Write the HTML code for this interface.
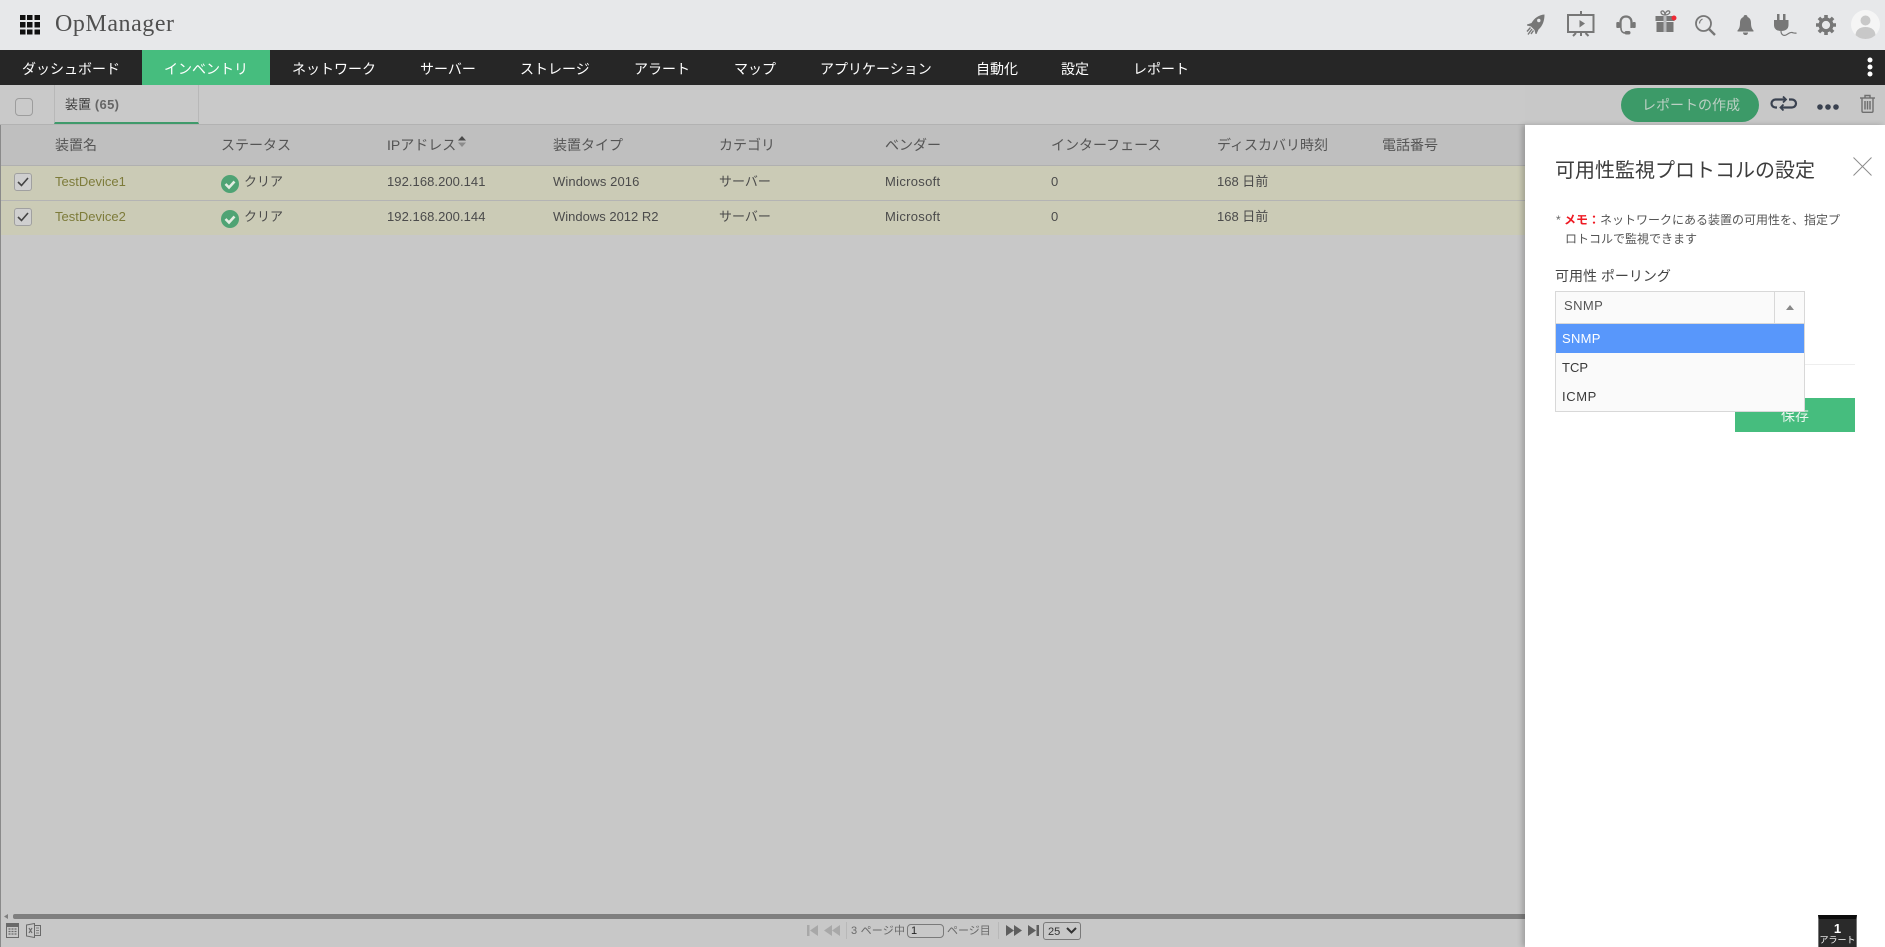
<!DOCTYPE html>
<html lang="ja"><head><meta charset="utf-8"><title>OpManager</title>
<style>
*{box-sizing:border-box}
html,body{margin:0;padding:0;width:1885px;height:947px;overflow:hidden;background:#c8c8c8}
body{position:relative;font-family:"Liberation Sans","Noto Sans CJK JP",sans-serif;font-size:13px;color:#4b4b4b}
.a{position:absolute}
.t{position:absolute;white-space:nowrap;line-height:20px;height:20px}
.n{color:#fff;font-size:14px;top:59px;font-weight:400}
.h{top:135px;font-size:14px;color:#555}
.r1{top:172px}.r2{top:207px}
.lnk{color:#7d7b3a}
.cb{position:absolute;width:18px;height:18px;border:1px solid #a0a0a0;border-radius:3px;background:#cfcfcf}
svg{position:absolute;display:block}
</style></head><body>

<!-- header -->
<div class="a" style="left:0;top:0;width:1885px;height:50px;background:#e7e8ea"></div>
<svg style="left:20px;top:15px" width="20" height="20" viewBox="0 0 20 20" fill="#111"><rect x="0" y="0" width="5.500" height="5"/><rect x="7" y="0" width="5.500" height="5"/><rect x="14.500" y="0" width="5.500" height="5"/><rect x="0" y="7" width="5.500" height="5.500"/><rect x="7" y="7" width="5.500" height="5.500"/><rect x="14.500" y="7" width="5.500" height="5.500"/><rect x="0" y="14.500" width="5.500" height="5"/><rect x="7" y="14.500" width="5.500" height="5"/><rect x="14.500" y="14.500" width="5.500" height="5"/></svg>
<div class="t" style="left:55px;top:12px;font:24px/24px 'Liberation Serif','Noto Serif CJK SC',serif;height:24px;color:#505050;letter-spacing:.55px">OpManager</div>

<!-- header icons -->
<svg style="left:1526px;top:14px" width="19" height="21" viewBox="0 0 19 21" fill="#777"><path d="M18.500 0.500C12.500 1 8.500 4 5.500 9L1 10.500V11.500L5 12.500L8.500 16L9.500 20H10.500L12.500 15.500C16.500 12 18.500 7 18.500 0.500Z"/><circle cx="12.800" cy="6.500" r="1.700" fill="#e7e8ea"/><path d="M4.500 13.500L1 17.500M6 15L2 20.500M7.500 16.500L5 20" stroke="#777" stroke-width="1.400" fill="none"/></svg>
<svg style="left:1567px;top:11px" width="28" height="26" viewBox="0 0 28 26" fill="none" stroke="#777"><path d="M14 0V4" stroke-width="2"/><rect x="1" y="4" width="25.500" height="17" stroke-width="2"/><path d="M12.500 9L18 12.500L12.500 16.500Z" fill="#777" stroke="none"/><path d="M6 25L9 22M21.500 25L18.500 22M14 22V25" stroke-width="2"/></svg>
<svg style="left:1616px;top:15px" width="20" height="21" viewBox="0 0 20 21" fill="none" stroke="#777"><path d="M4.500 13V7.500C4.500 3.500 6.800 1.500 10 1.500S15.500 3.500 15.500 7.500V13" stroke-width="2.300"/><rect x="0.300" y="7" width="3.200" height="6" rx="1" fill="#777" stroke="none"/><rect x="16.500" y="7" width="3.200" height="6" rx="1" fill="#777" stroke="none"/><path d="M5 13C5 16.500 7 18 9 18" stroke-width="1.600"/><rect x="8.500" y="16" width="6" height="3.500" rx="1.700" fill="#777" stroke="none"/></svg>
<svg style="left:1655px;top:9px" width="24" height="24" viewBox="0 0 24 24"><g fill="none" stroke="#777" stroke-width="1.300"><path d="M10 6C6 6 5 2.500 7 2S10 4 10 6C10 4 12 1 14 2S14 6 10 6Z"/></g><rect x="0.500" y="7" width="19" height="5" fill="#777"/><rect x="1.500" y="13" width="17" height="10" fill="#777"/><rect x="8.500" y="7" width="3" height="16" fill="#b9babc"/><circle cx="19" cy="9" r="2.500" fill="#ee2a36"/></svg>
<svg style="left:1695px;top:15px" width="21" height="21" viewBox="0 0 21 21" fill="none" stroke="#777"><circle cx="8.500" cy="8.500" r="7.500" stroke-width="1.800"/><path d="M14 14L20 20" stroke-width="2.400"/><path d="M4.500 8.500C4.500 6.500 5.500 5 7.500 4" stroke-width="1.200"/></svg>
<svg style="left:1737px;top:15px" width="17" height="20" viewBox="0 0 17 20" fill="#777"><path d="M8.500 0C10 0 10.500 1 10.500 2C13 3 14 5 14 8C14 12 15 14 16.500 15.500V16.500H0.500V15.500C2 14 3 12 3 8C3 5 4 3 6.500 2C6.500 1 7 0 8.500 0Z"/><path d="M6 17.500H11C11 19 10 20 8.500 20S6 19 6 17.500Z"/></svg>
<svg style="left:1774px;top:14px" width="23" height="23" viewBox="0 0 23 23"><g fill="#777"><rect x="3" y="0" width="2.500" height="7"/><rect x="9" y="0" width="2.500" height="7"/><path d="M0 6H14.500V11C14.500 15 11.500 17 7.200 17S0 15 0 11Z"/></g><path d="M7 17C7 21 10 22 12 21S16 18 18 18.500S21 19.500 22.500 19" fill="none" stroke="#777" stroke-width="1.200"/></svg>
<svg style="left:1816px;top:15px" width="20" height="20" viewBox="0 0 20 20"><circle cx="10" cy="10" r="5.800" fill="none" stroke="#777" stroke-width="3.400"/><g stroke="#777" stroke-width="3.600"><path d="M10 0V3.500M10 16.500V20M0 10H3.500M16.500 10H20M2.900 2.900L5.400 5.400M14.600 14.600L17.100 17.100M2.900 17.100L5.400 14.600M14.600 5.400L17.100 2.900"/></g></svg>
<svg style="left:1851px;top:10px" width="29" height="29" viewBox="0 0 29 29"><circle cx="14.500" cy="14.500" r="14.500" fill="#f5f5f5"/><circle cx="14.500" cy="10.500" r="5" fill="#c8c8c8"/><path d="M4.500 25C5 19.500 9 17 14.500 17S24 19.500 24.500 25C22 27.500 18.500 29 14.500 29S7 27.500 4.500 25Z" fill="#c8c8c8"/></svg>

<!-- nav -->
<div class="a" style="left:0;top:50px;width:1885px;height:35px;background:#262626"></div>
<div class="a" style="left:142px;top:50px;width:128px;height:35px;background:#46bd7e"></div>
<span class="t n" style="left:22px">ダッシュボード</span>
<span class="t n" style="left:164px">インベントリ</span>
<span class="t n" style="left:292px">ネットワーク</span>
<span class="t n" style="left:420px">サーバー</span>
<span class="t n" style="left:520px">ストレージ</span>
<span class="t n" style="left:634px">アラート</span>
<span class="t n" style="left:734px">マップ</span>
<span class="t n" style="left:820px">アプリケーション</span>
<span class="t n" style="left:976px">自動化</span>
<span class="t n" style="left:1061px">設定</span>
<span class="t n" style="left:1133px">レポート</span>
<svg style="left:1866px;top:56px" width="8" height="22" viewBox="0 0 8 22" fill="#fff"><circle cx="4" cy="4" r="2.500"/><circle cx="4" cy="11" r="2.500"/><circle cx="4" cy="18" r="2.500"/></svg>

<!-- dimmed main -->
<div class="a" style="left:0;top:85px;width:1px;height:862px;background:#8a8a8a"></div>
<div class="a" style="left:0;top:85px;width:1525px;height:39px;background:#c9c9c9"></div>
<div class="a" style="left:0;top:124px;width:1525px;height:1px;background:#b2b2b2"></div>
<div class="a" style="left:54px;top:85px;width:145px;height:39px;border-left:1px solid #b8b8b8;border-right:1px solid #b8b8b8;border-bottom:2px solid #3f9a6b"></div>
<div class="cb" style="left:15px;top:98px;border-color:#9d9d9d;background:#cacaca;width:18px;height:18px;border-radius:4px"></div>
<span class="t" style="left:65px;top:95px;font-size:13px;color:#666;font-weight:700;letter-spacing:.3px"><span style="color:#3c3c3c;font-weight:400;letter-spacing:0">装置</span> (65)</span>

<!-- action toolbar -->
<div class="a" style="left:1621px;top:88px;width:138px;height:34px;border-radius:17px;background:#3c9a68"></div>
<span class="t" style="left:1642px;top:95px;font-size:14px;color:#bcd0c4">レポートの作成</span>
<svg style="left:1770px;top:96px" width="28" height="15" viewBox="0 0 28 15" fill="none" stroke="#3a4250" stroke-width="2.200"><path d="M7 11.500H5.500A4 4 0 0 1 5.500 3.500H15"/><path d="M19 3.500H22A4 4 0 0 1 22 11.500H11"/><path d="M13 0.500L16 3.500L13 6.500" stroke-width="1.800"/><path d="M13.500 8.500L10.500 11.500L13.500 14.500" stroke-width="1.800"/></svg>
<svg style="left:1817px;top:103px" width="22" height="8" viewBox="0 0 22 8" fill="#3a4250"><circle cx="3" cy="4" r="2.800"/><circle cx="11" cy="4" r="2.800"/><circle cx="19" cy="4" r="2.800"/></svg>
<svg style="left:1859px;top:94px" width="17" height="19" viewBox="0 0 17 19" fill="none" stroke="#6f6f6f" stroke-width="1.400"><path d="M1 4H16"/><path d="M6 4V1.500H11V4"/><path d="M3 4V17C3 17.800 3.500 18.300 4.200 18.300H12.800C13.500 18.300 14 17.800 14 17V4"/><path d="M6 7V15.500M8.500 7V15.500M11 7V15.500" stroke-width="1.500"/></svg>

<!-- table -->
<div class="a" style="left:1px;top:125px;width:1524px;height:41px;background:#bfbfbf;border-bottom:1px solid #b0b0b0"></div>
<div class="a" style="left:1px;top:166px;width:1524px;height:35px;background:#cbcbb6;border-bottom:1px solid #b4b4b4"></div>
<div class="a" style="left:1px;top:201px;width:1524px;height:34px;background:#cbcbb6"></div>

<span class="t h" style="left:55px">装置名</span>
<span class="t h" style="left:221px">ステータス</span>
<span class="t h" style="left:387px">IPアドレス</span>
<svg style="left:458px;top:136px" width="8" height="12" viewBox="0 0 8 12"><path d="M0 4.500L4 0L8 4.500Z" fill="#4a4a4a"/><path d="M0 6.500L4 11L8 6.500Z" fill="#8c8c8c"/></svg>
<span class="t h" style="left:553px">装置タイプ</span>
<span class="t h" style="left:719px">カテゴリ</span>
<span class="t h" style="left:885px">ベンダー</span>
<span class="t h" style="left:1051px">インターフェース</span>
<span class="t h" style="left:1217px">ディスカバリ時刻</span>
<span class="t h" style="left:1382px">電話番号</span>

<div class="cb" style="left:14px;top:173px"></div>
<div class="cb" style="left:14px;top:208px"></div>
<svg style="left:17px;top:177px" width="12" height="10" viewBox="0 0 12 10" fill="none" stroke="#444" stroke-width="1.600"><path d="M1 5L4.500 8.500L11 1"/></svg>
<svg style="left:17px;top:212px" width="12" height="10" viewBox="0 0 12 10" fill="none" stroke="#444" stroke-width="1.600"><path d="M1 5L4.500 8.500L11 1"/></svg>

<span class="t r1 lnk" style="left:55px">TestDevice1</span>
<svg style="left:221px;top:175px" width="18" height="18" viewBox="0 0 18 18"><circle cx="9" cy="9" r="9" fill="#4fa374"/><path d="M4.500 9L8 12.500L13.500 6.500" fill="none" stroke="#e3ece2" stroke-width="2.600"/></svg>
<span class="t r1" style="left:244px">クリア</span>
<span class="t r1" style="left:387px;letter-spacing:.06px">192.168.200.141</span>
<span class="t r1" style="left:553px;letter-spacing:.1px">Windows 2016</span>
<span class="t r1" style="left:719px">サーバー</span>
<span class="t r1" style="left:885px;letter-spacing:.3px">Microsoft</span>
<span class="t r1" style="left:1051px">0</span>
<span class="t r1" style="left:1217px">168 日前</span>

<span class="t r2 lnk" style="left:55px">TestDevice2</span>
<svg style="left:221px;top:210px" width="18" height="18" viewBox="0 0 18 18"><circle cx="9" cy="9" r="9" fill="#4fa374"/><path d="M4.500 9L8 12.500L13.500 6.500" fill="none" stroke="#e3ece2" stroke-width="2.600"/></svg>
<span class="t r2" style="left:244px">クリア</span>
<span class="t r2" style="left:387px;letter-spacing:.06px">192.168.200.144</span>
<span class="t r2" style="left:553px">Windows 2012 R2</span>
<span class="t r2" style="left:719px">サーバー</span>
<span class="t r2" style="left:885px;letter-spacing:.3px">Microsoft</span>
<span class="t r2" style="left:1051px">0</span>
<span class="t r2" style="left:1217px">168 日前</span>

<!-- bottom bar -->
<svg style="left:3px;top:914px" width="12" height="5" viewBox="0 0 12 5"><path d="M1 2.500L5 0V5Z" fill="#7f7f7f"/></svg>
<div class="a" style="left:13px;top:914px;width:1512px;height:5px;background:#7f7f7f;border-radius:2px 0 0 2px"></div>
<svg style="left:6px;top:923px" width="13" height="15" viewBox="0 0 13 15" fill="none" stroke="#6a6a6a"><rect x="0.500" y="0.500" width="12" height="14"/><rect x="0.500" y="0.500" width="12" height="3" fill="#6a6a6a"/><path d="M2.500 6H10.500M2.500 8.500H10.500M2.500 11H10.500" stroke-dasharray="2 1" stroke-width="1.300"/></svg>
<svg style="left:26px;top:923px" width="15" height="15" viewBox="0 0 15 15" fill="none" stroke="#6a6a6a"><path d="M0.500 2L8.500 0.500V14.500L0.500 13Z"/><rect x="8.500" y="2.500" width="6" height="10"/><path d="M3 5L6 10M6 5L3 10" stroke-width="1.200"/><path d="M10 5H13M10 7.500H13M10 10H13" stroke-width=".8"/></svg>

<svg style="left:807px;top:924px" width="11" height="13" viewBox="0 0 11 13" fill="#a8a8a8"><rect x="0" y="1" width="2.500" height="11"/><path d="M11 1V12L3 6.500Z"/></svg>
<svg style="left:824px;top:924px" width="16" height="13" viewBox="0 0 16 13" fill="#a8a8a8"><path d="M8 1V12L0 6.500Z"/><path d="M16 1V12L8 6.500Z"/></svg>
<div class="a" style="left:846px;top:922px;width:1px;height:17px;background:#b8b8b8"></div>
<span class="t" style="left:851px;top:921px;font-size:11px;color:#6a6a6a;letter-spacing:.2px">3 ページ中</span>
<div class="a" style="left:907px;top:924px;width:37px;height:14px;border:1px solid #7a7a7a;border-radius:4px;background:#c8c8c8;font-size:11px;line-height:13px;padding-left:3px;color:#222">1</div>
<span class="t" style="left:947px;top:921px;font-size:11px;color:#6a6a6a">ページ目</span>
<div class="a" style="left:998px;top:922px;width:1px;height:17px;background:#b8b8b8"></div>
<svg style="left:1006px;top:924px" width="16" height="13" viewBox="0 0 16 13" fill="#5e5e5e"><path d="M0 1V12L8 6.500Z"/><path d="M8 1V12L16 6.500Z"/></svg>
<svg style="left:1028px;top:924px" width="11" height="13" viewBox="0 0 11 13" fill="#5e5e5e"><path d="M0 1V12L8 6.500Z"/><rect x="8.500" y="1" width="2.500" height="11"/></svg>
<div class="a" style="left:1043px;top:922px;width:38px;height:18px;border:1px solid #7a7a7a;border-radius:3px;background:#c8c8c8;font-size:11px;line-height:18px;padding-left:4px;color:#333">25</div>
<svg style="left:1066px;top:927px" width="11" height="7" viewBox="0 0 11 7" fill="none" stroke="#333" stroke-width="2"><path d="M1 1L5.500 5.500L10 1"/></svg>

<!-- right panel -->
<div class="a" style="left:1525px;top:125px;width:360px;height:822px;background:#fff;box-shadow:-3px 0 5px rgba(0,0,0,.2)"></div>
<span class="t" style="left:1555px;top:161px;font-size:20px;line-height:20px;color:#3c3c3c">可用性監視プロトコルの設定</span>
<svg style="left:1853px;top:157px" width="19" height="19" viewBox="0 0 19 19" stroke="#8c8c8c" stroke-width="1" fill="none"><path d="M0.500 0.500L18.500 18.500M18.500 0.500L0.500 18.500"/></svg>
<span class="t" style="left:1556px;top:210px;font-size:12px;color:#666">*</span>
<span class="t" style="left:1564px;top:210px;font-size:12px;color:#555"><b style="color:#ee1b24;font-weight:700">メモ：</b>ネットワークにある装置の可用性を、指定プ</span>
<span class="t" style="left:1565px;top:229px;font-size:12px;color:#555">ロトコルで監視できます</span>
<span class="t" style="left:1555px;top:266px;font-size:14px;color:#444">可用性 ポーリング</span>

<div class="a" style="left:1555px;top:364px;width:300px;height:1px;background:#eeeeee"></div>
<div class="a" style="left:1735px;top:398px;width:120px;height:34px;background:#46bd7e"></div>
<span class="t" style="left:1781px;top:406px;font-size:14px;color:#e9f6ee">保存</span>

<div class="a" style="left:1555px;top:291px;width:250px;height:33px;background:#fafafa;border:1px solid #d8d8d8"></div>
<div class="a" style="left:1774px;top:291px;width:1px;height:33px;background:#d8d8d8"></div>
<svg style="left:1786px;top:305px" width="8" height="5" viewBox="0 0 8 5"><path d="M0 5L4 0L8 5Z" fill="#888"/></svg>
<span class="t" style="left:1564px;top:296px;font-size:13px;color:#555;letter-spacing:.4px">SNMP</span>
<div class="a" style="left:1555px;top:323px;width:250px;height:89px;background:#fafafa;border:1px solid #d8d8d8;border-top:1px solid #d8d8d8"></div>
<div class="a" style="left:1556px;top:324px;width:248px;height:29px;background:#5897fb"></div>
<span class="t" style="left:1562px;top:329px;font-size:13px;color:#fff;letter-spacing:.3px">SNMP</span>
<span class="t" style="left:1562px;top:358px;font-size:13px;color:#3a3a3a">TCP</span>
<span class="t" style="left:1562px;top:387px;font-size:13px;color:#3a3a3a;letter-spacing:.6px">ICMP</span>

<!-- alert badge -->
<div class="a" style="left:1818px;top:915px;width:39px;height:32px;background:#2a2a2a;border:1px solid #777;border-bottom:0;border-top:4px solid #0c0c0c;outline:0"></div>
<span class="t" style="left:1818px;top:919px;width:39px;text-align:center;font-size:13px;font-weight:700;color:#fff;line-height:20px">1</span>
<span class="t" style="left:1818px;top:933px;width:39px;text-align:center;font-size:9px;line-height:14px;height:14px;color:#fff">アラート</span>
</body></html>
